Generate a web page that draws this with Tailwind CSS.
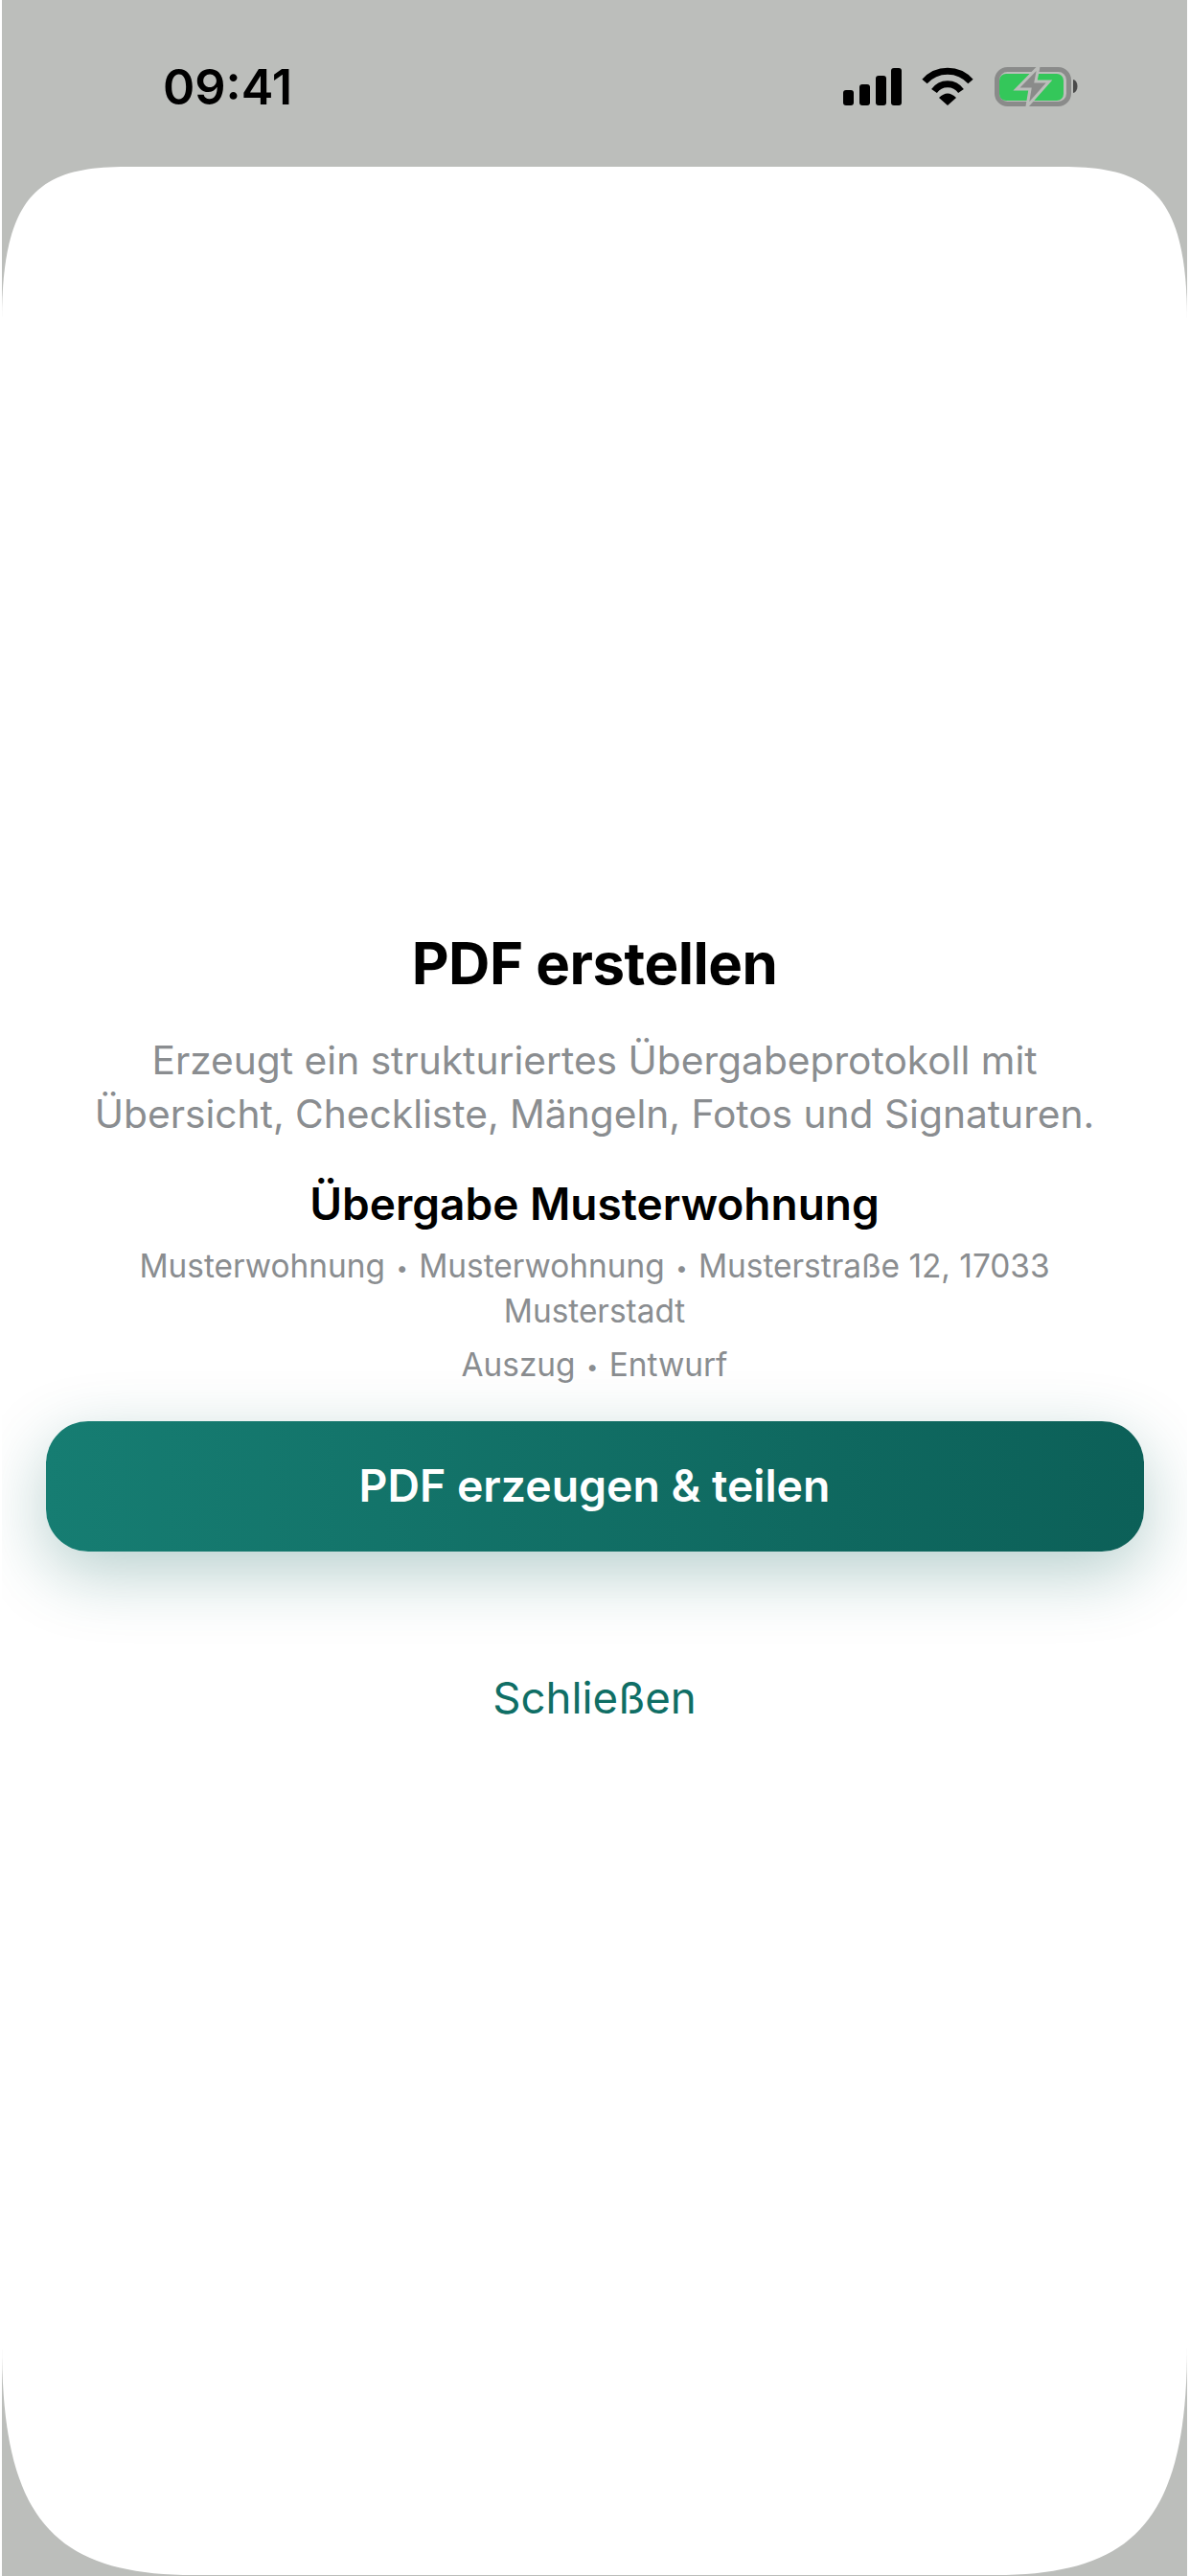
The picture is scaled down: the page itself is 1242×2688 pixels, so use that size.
<!doctype html>
<html lang="de">
  <head>
    <meta charset="UTF-8" />
    <script src="https://cdn.jsdelivr.net/npm/@tailwindcss/browser@4"></script>
    <title>PDF erstellen</title>
  </head>
  <body class="bg-white">
    <div class="w-[1242px] h-[2688px] overflow-hidden bg-white pl-[2px] pr-[3px] font-['Inter','Liberation_Sans',sans-serif]">
      <div class="h-full bg-[#bcbebb] flex flex-col">
        <!-- status bar -->
        <div class="h-[174px] shrink-0 flex items-start justify-between pl-[168px] pr-[109px] pt-[64px]">
          <span class="text-[50.5px] leading-[54px] font-semibold text-black">09:41</span>
          <svg class="mt-[5px]" width="250" height="44" viewBox="0 0 250 44">
            <rect x="0" y="25" width="11" height="16" rx="3" fill="#000" />
            <rect x="17" y="19" width="11" height="22" rx="3" fill="#000" />
            <rect x="34" y="10" width="11" height="31" rx="3" fill="#000" />
            <rect x="50" y="2" width="11" height="39" rx="3" fill="#000" />
            <path d="M85 16 A32 32 0 0 1 133 16" fill="none" stroke="#000" stroke-width="7" />
            <path d="M95 26 A17 17 0 0 1 123 26" fill="none" stroke="#000" stroke-width="7" />
            <path d="M100 33 Q109 24 118 33 L109 41 Z" fill="#000" />
            <rect x="160.500" y="3.500" width="75" height="36" rx="11" fill="none" stroke="#8a8b8a" stroke-width="5" />
            <rect x="163" y="8" width="67" height="28" rx="7" fill="#34c75a" />
            <path d="M240 14 C246 15 246 27 240 28 Z" fill="#4a4a4a" />
            <path d="M204 0.500 L181 24 L195 24 L192 42 L215 16 L201 16 Z" fill="#8a8b8a" stroke="#bcbebb" stroke-width="3" />
          </svg>
        </div>
        <!-- sheet -->
        <div class="flex-1 mb-[1px] bg-white flex flex-col items-center pt-[797px] [clip-path:path('M0_160_C0_26_42_0_130_0_L1107_0_C1195_0_1237_26_1237_160_L1237_2273_C1237_2453_1184_2513_1037_2513_L200_2513_C53_2513_0_2453_0_2273_Z')]">
          <h1 class="text-[60px] leading-[68px] font-bold text-black tracking-[-0.5px]">PDF erstellen</h1>
          <p class="mt-[40px] text-[40.7px] leading-[56px] text-[#8a8d90] text-center">Erzeugt ein strukturiertes Übergabeprotokoll mit<br />Übersicht, Checkliste, Mängeln, Fotos und Signaturen.</p>
          <h2 class="mt-[37px] text-[46px] leading-[56px] font-semibold text-black">Übergabe Musterwohnung</h2>
          <p class="mt-[15px] w-[1000px] text-[33.4px] leading-[44.5px] text-[#8a8d90] text-center">Musterwohnung <span class="text-[22px] mx-[2px] align-[2px]">•</span> Musterwohnung <span class="text-[22px] mx-[2px] align-[2px]">•</span> Musterstraße 12, 17033<br />Musterstadt</p>
          <p class="mt-[12px] text-[33.4px] leading-[44.5px] text-[#8a8d90]">Auszug <span class="text-[22px] mx-[2px] align-[2px]">•</span> Entwurf</p>
          <button class="mt-[34px] w-[1146px] h-[136px] rounded-[44px] bg-gradient-to-r from-[#167d72] to-[#0c6058] text-white text-[46.4px] font-semibold shadow-[0_22px_70px_rgba(12,96,88,0.3)]">PDF erzeugen &amp; teilen</button>
          <span class="mt-[125px] text-[45.6px] leading-[56px] text-[#0f6e65]">Schließen</span>
        </div>
      </div>
    </div>
  </body>
</html>
